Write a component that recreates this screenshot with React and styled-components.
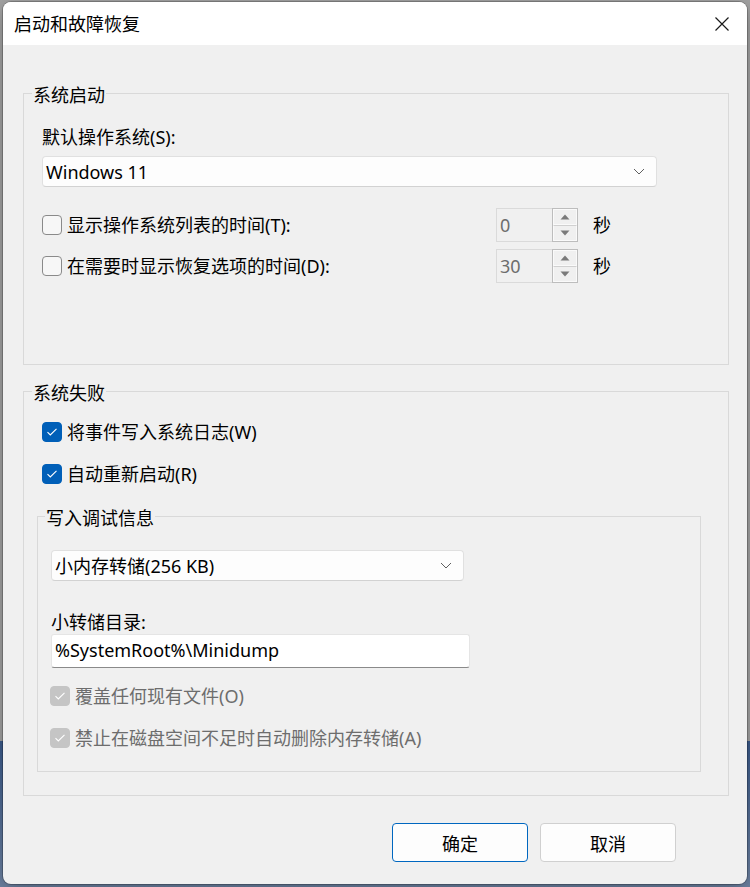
import styled, { createGlobalStyle } from 'styled-components';

const GlobalStyle = createGlobalStyle`
  html, body {
    margin: 0;
    padding: 0;
  }
  body {
    width: 750px;
    height: 887px;
    overflow: hidden;
    background: linear-gradient(180deg, #a3a3a3 0, #a3a3a3 83.5%, #3b5b8c 83.5%, #6f84a4 100%);
    font-family: "Noto Sans", "Noto Sans CJK SC", sans-serif;
    font-size: 18px;
    color: #000;
  }
`;

const Backdrop = styled.div`
  padding: 2px 0 0 3px;
`;

const Window = styled.div`
  width: 744px;
  height: 882px;
  display: flex;
  flex-direction: column;
  background: #f0f0f0;
  border-radius: 8px;
  overflow: hidden;
  box-shadow: 0 0 0 1px rgba(0, 0, 0, 0.22), 0 6px 20px rgba(0, 0, 0, 0.3);
`;

const TitleBar = styled.div`
  height: 43px;
  flex-shrink: 0;
  display: flex;
  align-items: center;
  justify-content: space-between;
  padding: 0 18px 0 11px;
  background: #fff;
`;

const Title = styled.span`
  font-size: 18px;
  line-height: 24px;
`;

const Body = styled.div`
  flex: 1;
  display: flex;
  flex-direction: column;
  padding: 0 18px 0 20px;
`;

const GroupBox = styled.fieldset`
  margin: ${p => p.$top}px 0 0 0;
  padding: 0;
  min-width: 0;
  border: 1px solid #d9d9d9;
`;

const Legend = styled.legend`
  margin-left: ${p => p.$indent}px;
  padding: 4px 1px 0;
  font-size: 18px;
  line-height: 22px;
`;

const GroupContent = styled.div`
  display: flex;
  flex-direction: column;
  align-items: ${p => (p.$stretch ? 'stretch' : 'flex-start')};
  padding: ${p => p.$pad};
`;

const FieldLabel = styled.div`
  margin-top: ${p => p.$top || 0}px;
  line-height: ${p => p.$lh || 24}px;
`;

const Select = styled.div`
  box-sizing: border-box;
  width: ${p => p.$width}px;
  height: 31px;
  margin-top: ${p => p.$top}px;
  display: flex;
  align-items: center;
  justify-content: space-between;
  padding: 0 11px 0 3px;
  background: #fdfdfd;
  border: 1px solid #e0e0e0;
  border-bottom-color: #d2d2d2;
  border-radius: 4px;
  line-height: 24px;
`;

const TextBox = styled.div`
  box-sizing: border-box;
  width: ${p => p.$width}px;
  height: 34px;
  margin-top: ${p => p.$top}px;
  display: flex;
  align-items: center;
  padding: 0 3px 2px;
  background: #fff;
  border: 1px solid #e5e5e5;
  border-bottom: 1px solid #8a8a8a;
  border-radius: 3px;
  line-height: 24px;
`;

const Row = styled.div`
  display: flex;
  align-items: center;
  height: ${p => p.$height || 24}px;
  margin-top: ${p => p.$top}px;
  margin-left: ${p => p.$indent || 0}px;
`;

const CheckLabel = styled.label`
  display: flex;
  align-items: center;
  gap: 5px;
  width: ${p => (p.$width ? `${p.$width}px` : 'auto')};
  line-height: 24px;
  color: ${p => (p.$disabled ? '#6d6d6d' : '#000')};
`;

const Box = styled.span`
  box-sizing: border-box;
  width: 20px;
  height: 20px;
  flex-shrink: 0;
  display: flex;
  align-items: center;
  justify-content: center;
  border-radius: 4px;
  border: 1px solid ${p => (p.$checked ? (p.$disabled ? '#c5c5c5' : '#005fb8') : '#8a8a8a')};
  background: ${p => (p.$checked ? (p.$disabled ? '#c5c5c5' : '#005fb8') : '#f7f7f7')};
`;

const Spin = styled.div`
  display: flex;
  height: 34px;
`;

const SpinField = styled.div`
  box-sizing: border-box;
  width: 56px;
  height: 34px;
  padding: 0 3px;
  display: flex;
  align-items: center;
  border: 1px solid #dadada;
  border-right: none;
  color: #6d6d6d;
  line-height: 24px;
`;

const SpinButtons = styled.div`
  box-sizing: border-box;
  width: 26px;
  height: 34px;
  display: flex;
  flex-direction: column;
  border: 1px solid #bdbdbd;
`;

const SpinButton = styled.div`
  flex: 1;
  display: flex;
  align-items: center;
  justify-content: center;
  border: 1px solid #fafafa;
  border-top: ${p => (p.$down ? '1px solid #d0d0d0' : '1px solid #fafafa')};
`;

const Unit = styled.span`
  margin-left: 15px;
  line-height: 24px;
`;

const ButtonRow = styled.div`
  display: flex;
  justify-content: flex-end;
  gap: 12px;
  margin-top: 27px;
  padding-right: 53px;
`;

const Button = styled.button`
  box-sizing: border-box;
  width: 136px;
  height: 39px;
  padding: 0;
  font-family: inherit;
  font-size: 18px;
  color: #000;
  background: #fdfdfd;
  border: 1px solid ${p => (p.$primary ? '#0067c0' : '#d0d0d0')};
  border-radius: 4px;
`;

const Check = () => (
  <svg width="12" height="10" viewBox="0 0 12 10">
    <polyline points="1.5,5.2 4.3,8 10.5,1.8" fill="none" stroke="#fff" strokeWidth="1.1" />
  </svg>
);

const CheckBox = ({ checked, disabled, width, children }) => (
  <CheckLabel $width={width} $disabled={disabled}>
    <Box $checked={checked} $disabled={disabled}>{checked && <Check />}</Box>
    {children}
  </CheckLabel>
);

const Chevron = () => (
  <svg width="12" height="7" viewBox="0 0 12 7">
    <polyline points="1,1 6,6 11,1" fill="none" stroke="#5f5f5f" strokeWidth="1" />
  </svg>
);

const Triangle = ({ down }) => (
  <svg width="10" height="6" viewBox="0 0 10 6">
    <polygon points={down ? '0.5,0.5 9.5,0.5 5,5.5' : '0.5,5.5 9.5,5.5 5,0.5'} fill="#7a7a7a" />
  </svg>
);

const SpinBox = ({ value }) => (
  <Spin>
    <SpinField>{value}</SpinField>
    <SpinButtons>
      <SpinButton><Triangle /></SpinButton>
      <SpinButton $down><Triangle down /></SpinButton>
    </SpinButtons>
  </Spin>
);

const CloseIcon = () => (
  <svg width="14" height="14" viewBox="0 0 14 14">
    <path d="M0.5 0.5L13.5 13.5M13.5 0.5L0.5 13.5" stroke="#1a1a1a" strokeWidth="1.2" />
  </svg>
);

export default function App() {
  return (
    <>
      <GlobalStyle />
      <Backdrop>
        <Window>
          <TitleBar>
            <Title>启动和故障恢复</Title>
            <CloseIcon />
          </TitleBar>
          <Body>
            <GroupBox $top={35}>
              <Legend $indent={8}>系统启动</Legend>
              <GroupContent $pad="19px 0 81px 18px">
                <FieldLabel>默认操作系统(S):</FieldLabel>
                <Select $width={615} $top={7}>
                  <span>Windows 11</span>
                  <Chevron />
                </Select>
                <Row $height={34} $top={21}>
                  <CheckBox width={454}>显示操作系统列表的时间(T):</CheckBox>
                  <SpinBox value="0" />
                  <Unit>秒</Unit>
                </Row>
                <Row $height={34} $top={7}>
                  <CheckBox width={454}>在需要时显示恢复选项的时间(D):</CheckBox>
                  <SpinBox value="30" />
                  <Unit>秒</Unit>
                </Row>
              </GroupContent>
            </GroupBox>

            <GroupBox $top={13}>
              <Legend $indent={8}>系统失败</Legend>
              <GroupContent $pad="16px 27px 23px 13px" $stretch>
                <Row $top={0} $indent={5}>
                  <CheckBox checked>将事件写入系统日志(W)</CheckBox>
                </Row>
                <Row $top={18} $indent={5}>
                  <CheckBox checked>自动重新启动(R)</CheckBox>
                </Row>
                <GroupBox $top={17}>
                  <Legend $indent={7}>写入调试信息</Legend>
                  <GroupContent $pad="0 0 21px 13px">
                    <Select $width={413} $top={21}>
                      <span>小内存转储(256 KB)</span>
                      <Chevron />
                    </Select>
                    <FieldLabel $top={30} $lh={22}>小转储目录:</FieldLabel>
                    <TextBox $width={419} $top={1}>%SystemRoot%\Minidump</TextBox>
                    <Row $top={16} $indent={-1}>
                      <CheckBox checked disabled>覆盖任何现有文件(O)</CheckBox>
                    </Row>
                    <Row $top={18} $indent={-1}>
                      <CheckBox checked disabled>禁止在磁盘空间不足时自动删除内存转储(A)</CheckBox>
                    </Row>
                  </GroupContent>
                </GroupBox>
              </GroupContent>
            </GroupBox>

            <ButtonRow>
              <Button $primary>确定</Button>
              <Button>取消</Button>
            </ButtonRow>
          </Body>
        </Window>
      </Backdrop>
    </>
  );
}
